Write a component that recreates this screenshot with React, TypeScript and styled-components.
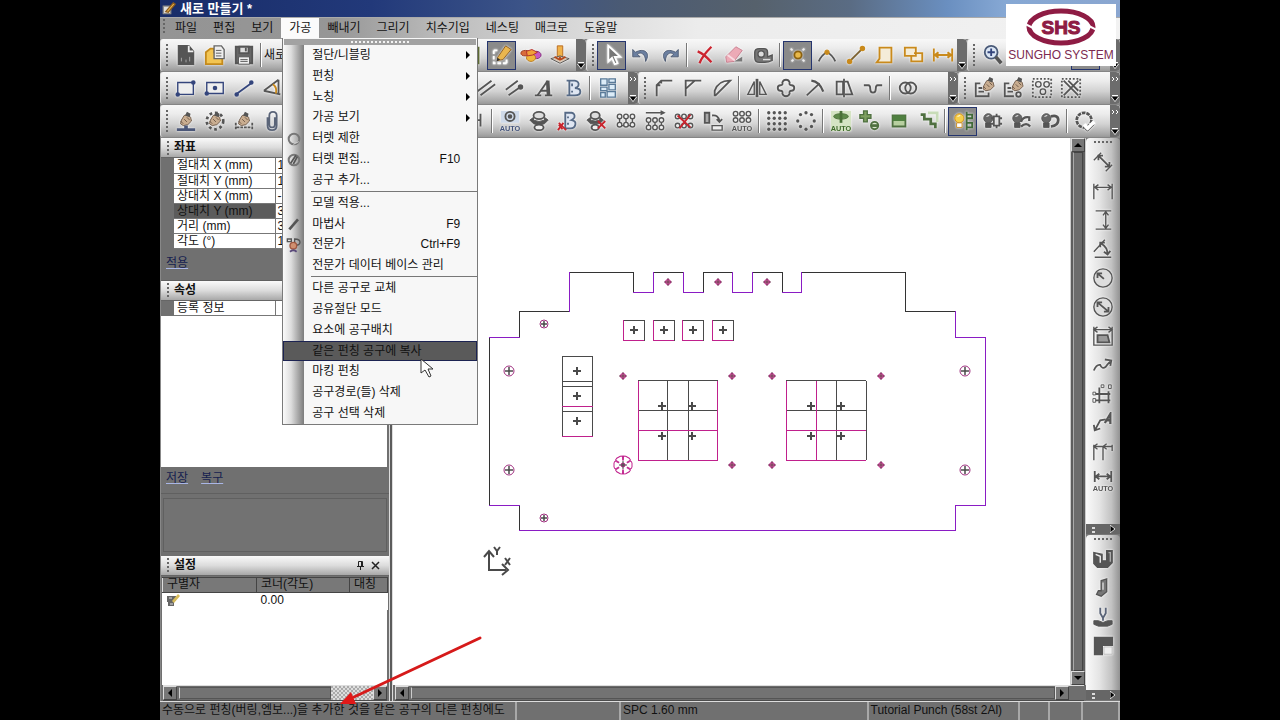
import React from 'react';
import styled, { createGlobalStyle, css } from 'styled-components';

const Global = createGlobalStyle`
  * { box-sizing: border-box; }
  body { margin: 0; background: #000; }
  button { font: inherit; color: inherit; border: 0; padding: 0; background: none; }
  ul { list-style: none; margin: 0; padding: 0; }
`;

const Stage = styled.div`
  display: flex;
  justify-content: center;
  min-height: 100vh;
  background: #000;
`;

const Window = styled.div`
  position: relative;
  display: flex;
  flex-direction: column;
  width: 75%;
  height: 100vh;
  min-height: 640px;
  overflow: hidden;
  background: #6e6e6e;
  color: #111;
  font: 12px/15px 'Liberation Sans', 'Noto Sans CJK KR', sans-serif;
`;

const TitleBar = styled.header`
  display: flex;
  align-items: center;
  gap: 3px;
  height: 17px;
  flex: none;
  padding-left: 2px;
  background: linear-gradient(to right, #182c68 0%, #22397a 22%, #3c5488 38%, #4a5a74 48%, #56616c 62%, #5a6c84 72%, #6a8fc0 82%, #86a8d4 88%, #8aa6d0 100%);
`;

const Title = styled.h1`
  margin: 0;
  color: #fff;
  font-size: 13px;
  line-height: 16px;
  font-weight: bold;
`;

const MenuBar = styled.nav`
  display: flex;
  flex: none;
  height: 22px;
  align-items: flex-start;
  border-top: 1px solid #aaa;
  background: linear-gradient(to right, #949494 0%, #969696 18%, #bdbdbd 30%, #d6d6d6 42%, #ececec 56%, #f2f2f2 100%);
`;

const MenuList = styled.ul`
  display: flex;
  margin-left: -3px;
`;

const MenuEntry = styled.li`
  position: relative;
`;

const MenuTitle = styled.button<{ $open?: boolean }>`
  height: 20px;
  padding: 0 8px;
  line-height: 20px;
  white-space: nowrap;
  background: ${p => (p.$open ? '#fbfbfb' : 'transparent')};
`;

const Grip = styled.span<{ $vertical?: boolean; $short?: boolean }>`
  flex: none;
  ${p =>
    p.$vertical
      ? css`
          width: 20px;
          height: 9px;
          align-self: center;
          background: radial-gradient(circle, #666 1px, transparent 1px) 0 0 / 4px 8px repeat-x;
        `
      : css`
          width: 10px;
          height: ${p.$short ? 16 : 24}px;
          background: radial-gradient(circle, #666 1px, transparent 1px) ${p.$short ? 0 : 2}px 0 / 8px 4px repeat-y;
        `}
`;

const DropMenu = styled.div`
  position: absolute;
  z-index: 5;
  top: 20px;
  left: 1px;
  width: 196px;
  border: 1px solid #7a7a7a;
  border-top: 0;
  background: #f7f7f7;
`;

const TearStrip = styled.div`
  height: 6px;
  margin: 1px 1px 0;
  background: #a2a2a2;
  &::after {
    content: '';
    display: block;
    width: 60px;
    height: 6px;
    margin: 0 auto;
    background: radial-gradient(circle, #f4f4f4 1px, transparent 1px) 0 0 / 4px 6px repeat-x;
  }
`;

const DropList = styled.ul`
  display: flex;
  flex-direction: column;
  height: 379px;
  background: linear-gradient(to right, #fafafa 0, #dedede 8px, #7c7c7c 21px, #f7f7f7 21px);
`;

const DropRow = styled.li`
  flex: 1 1 0;
  display: flex;
`;

const DropButton = styled.button<{ $selected?: boolean }>`
  display: flex;
  align-items: center;
  width: 100%;
  text-align: left;
  white-space: nowrap;
  border: 1px solid ${p => (p.$selected ? '#1c2352' : 'transparent')};
  background: ${p => (p.$selected ? '#5a5a5a' : 'transparent')};
`;

const DropIcon = styled.span`
  display: flex;
  justify-content: center;
  width: 20px;
  margin-right: 8px;
`;

const DropLabel = styled.span`
  flex: 1;
`;

const Shortcut = styled.span`
  padding-right: 16px;
`;

const SubArrow = styled.span`
  width: 0;
  margin-right: 6px;
  border: 4px solid transparent;
  border-left-color: #000;
  border-right-width: 0;
`;

const DropRule = styled.li`
  flex: none;
  height: 2px;
  margin-left: 28px;
  border-top: 1px solid #777;
`;

const ToolRow = styled.div`
  display: flex;
  flex: none;
  height: 33px;
  background: #858585;
`;

const Bar = styled.div<{ $grow: number }>`
  display: flex;
  align-items: center;
  flex: ${p => p.$grow} 1 0;
  min-width: 0;
  height: 32px;
  overflow: hidden;
  border-radius: 3px 4px 4px 3px;
  border-left: 1px solid #ddd;
  background: linear-gradient(#f8f8f8 0%, #ececec 28%, #d2d2d2 60%, #a9a9a9 90%, #989898 100%);
`;

const Tool = styled.button<{ $active?: boolean }>`
  display: flex;
  align-items: center;
  justify-content: center;
  flex: none;
  width: 29px;
  height: 29px;
  ${p => p.$active && css`border: 1px solid #25356e; background: #8a8a8a;`}
  svg { filter: drop-shadow(0 0 1px #fff); }
`;

const Rule = styled.span`
  flex: none;
  width: 6px;
  height: 24px;
  background: linear-gradient(#777, #777) 2px 0 / 1px 24px no-repeat, linear-gradient(#fff, #fff) 3px 0 / 1px 24px no-repeat;
`;

const Spacer = styled.span`
  flex: 1;
`;

const ToolText = styled.span`
  white-space: nowrap;
`;

const Cap = styled.button<{ $gap: number }>`
  display: flex;
  flex: none;
  flex-direction: column;
  justify-content: space-between;
  align-items: center;
  width: 10px;
  height: 32px;
  padding: 5px 0 2px;
  margin-left: ${p => p.$gap}px;
  border-radius: 0 4px 4px 0;
  background: #6c6c6c;
`;

const Body = styled.div`
  display: flex;
  flex: 1;
  min-height: 0;
`;

const Dock = styled.aside`
  display: flex;
  flex-direction: column;
  flex: none;
  width: 229px;
  border-left: 1px solid #888;
  background: #707070;
`;

const PaneHead = styled.div`
  display: flex;
  align-items: center;
  flex: none;
  height: 20px;
  padding: 0 6px 0 3px;
  border-bottom: 1px solid #666;
  background: linear-gradient(#fafafa, #dcdcdc 50%, #a8a8a8);
`;

const PaneTitle = styled.h2`
  flex: 1;
  margin: 0;
  font-size: 12px;
  font-weight: bold;
`;

const PaneButton = styled.button`
  display: flex;
  justify-content: center;
  width: 15px;
`;

const Grid = styled.table`
  flex: none;
  width: 214px;
  margin-left: 13px;
  border-collapse: collapse;
  table-layout: fixed;
  background: #fff;
`;

const NameCell = styled.th<{ $dark?: boolean }>`
  width: 101px;
  height: 15px;
  padding: 0 0 0 3px;
  border-bottom: 1px solid #777;
  border-right: 1px solid #777;
  font-weight: normal;
  line-height: 14px;
  text-align: left;
  background: ${p => (p.$dark ? '#5c5c5c' : '#fff')};
`;

const ValueCell = styled.td`
  padding: 0 0 0 2px;
  border-bottom: 1px solid #777;
  line-height: 14px;
`;

const LinkStrip = styled.div<{ $h: number }>`
  display: flex;
  flex: none;
  align-items: center;
  gap: 13px;
  height: ${p => p.$h}px;
  padding: 0 0 2px 5px;
  border-bottom: 1px solid #606060;
`;

const PaneLink = styled.a`
  color: #15204f;
  text-decoration: underline;
  text-decoration-color: #a9b6e6;
`;

const Blank = styled.div<{ $grow: number }>`
  flex: ${p => p.$grow} 1 0;
  min-height: 0;
  margin: 0 2px 0 ${p => (p.$grow < 100 ? 1 : 0)}px;
  background: #fff;
`;

const HintBox = styled.div`
  flex: none;
  height: 54px;
  margin: 4px 2px;
  border: 1px solid #606060;
  background: #727272;
`;

const Settings = styled.table`
  flex: none;
  width: 225px;
  margin: 1px 2px 0 1px;
  border-collapse: collapse;
  table-layout: fixed;
  background: #fff;
`;

const SetHead = styled.th<{ $w: number }>`
  width: ${p => p.$w}px;
  height: 15px;
  padding: 0 0 0 4px;
  border: 1px solid #444;
  border-left-color: #ddd;
  background: #787878;
  font-weight: normal;
  line-height: 13px;
  text-align: left;
  white-space: nowrap;
`;

const SetCell = styled.td`
  height: 15px;
  padding: 0 0 0 4px;
  line-height: 14px;
  vertical-align: top;
`;

const HScroll = styled.div`
  display: flex;
  flex: none;
  align-items: center;
  height: 16px;
  margin: 0 2px;
  border-top: 1px solid #ddd;
  border-bottom: 1px solid #4c4c4c;
  background: #6c6c6c;
`;

const ScrollButton = styled.button`
  display: flex;
  align-items: center;
  justify-content: center;
  flex: none;
  width: 14px;
  height: 14px;
  border: 1px solid #444;
  border-top-color: #ddd;
  border-left-color: #ddd;
  background: #777;
`;

const HThumb = styled.span`
  flex: 1;
  height: 12px;
  margin-left: 2px;
  border: 1px solid #555;
  border-left-color: #ccc;
  background: #737373;
`;

const HTrack = styled.span`
  width: 42px;
  height: 14px;
  background: repeating-conic-gradient(#ddd 0 25%, #aaa 0 50%) 0 0 / 4px 4px;
`;

const ScrollCorner = styled.span`
  flex: none;
  width: 15px;
  height: 14px;
  background: #6e6e6e;
`;

const Splitter = styled.div`
  flex: none;
  width: 4px;
  border-left: 1px solid #ddd;
  border-right: 1px solid #ddd;
  background: #5c5c5c;
`;

const Work = styled.main`
  display: flex;
  flex-direction: column;
  flex: 1;
  min-width: 0;
`;

const WorkTop = styled.div`
  display: flex;
  flex: 1;
  min-height: 0;
`;

const Drawing = styled.svg`
  flex: 1;
  min-width: 0;
  height: 100%;
  background: #fff;
`;

const VScroll = styled.div`
  display: flex;
  flex-direction: column;
  align-items: center;
  flex: none;
  width: 16px;
  border-left: 1px solid #ccc;
  border-right: 1px solid #ccc;
  background: #5e5e5e;
`;

const VThumb = styled.span`
  flex: 1;
  width: 10px;
  border: 1px solid #444;
  border-left-color: #aaa;
  background: #6c6c6c;
`;

const Side = styled.div`
  display: flex;
  flex-direction: column;
  flex: none;
  width: 34px;
  background: #777;
`;

const SideBar = styled.div<{ $grow?: boolean }>`
  display: flex;
  flex-direction: column;
  align-items: center;
  flex: ${p => (p.$grow ? '1' : 'none')};
  min-height: 165px;
  margin-bottom: 1px;
  overflow: hidden;
  border-radius: 4px 4px 0 0;
  background: linear-gradient(to right, #fafafa, #e4e4e4 40%, #c2c2c2 75%, #929292);
`;

const SideCap = styled.button`
  display: flex;
  align-items: center;
  justify-content: space-between;
  width: 100%;
  height: 10px;
  padding: 0 4px 0 6px;
  margin-top: auto;
  background: #666;
`;

const StatusBar = styled.footer`
  display: flex;
  flex: none;
  height: 19px;
  border-top: 1px solid #ddd;
  background: #707070;
`;

const StatusCell = styled.span<{ $grow: number }>`
  flex: ${p => p.$grow} 1 0;
  min-width: 0;
  padding-left: 2px;
  border-right: 2px solid #a8a8a8;
  line-height: 17px;
  white-space: nowrap;
`;

const LogoPlate = styled.div`
  position: absolute;
  z-index: 6;
  top: 4px;
  right: 4px;
  display: flex;
  flex-direction: column;
  align-items: center;
  width: 110px;
  height: 62px;
  padding-top: 2px;
  background: #fff;
`;

const LogoText = styled.span`
  color: #7c2a50;
  font-size: 12px;
  line-height: 14px;
  white-space: nowrap;
`;

const Overlay = styled.svg<{ $left: number; $top: number }>`
  position: absolute;
  z-index: 7;
  left: ${p => p.$left}px;
  top: ${p => p.$top}px;
  pointer-events: none;
`;

const G = '#555';
const O = '#c98a1c';
const N = '#34457c';

const auto = (fill: string) => (
  <text x="12" y="23" textAnchor="middle" fontSize="8" fontWeight="bold" stroke="none" fill={fill} fontFamily="Liberation Sans">AUTO</text>
);

const nodes = (pts: number[][], r = 2) => pts.map(([x, y], i) => <circle key={i} cx={x} cy={y} r={r} />);

const press = (
  <g strokeWidth="1" fill="#c9ad90" stroke="#6b5646">
    <path d="M7 11l3-5 4-1 3 3 1 4-4 4-5 1-3-2z" />
    <path d="M11 6l2-4 4 2-1 4" fill="#555" stroke="none" />
    <path d="M6 12l3 3M10 10l3 3M13 8l3 3" fill="none" />
  </g>
);

const bulb = (on: boolean) => (
  <g>
    <circle cx="8" cy="9" r="5" fill={on ? '#f6cf4a' : '#666'} stroke={on ? '#c98a1c' : '#555'} strokeWidth="1" />
    <path d="M5 14h6v5H5z" fill={on ? '#fff' : '#555'} stroke={on ? '#c98a1c' : '#555'} strokeWidth="1" />
    <path d="M6 7l3-1" stroke="#fff" strokeWidth="1" />
  </g>
);

const chain = (y: number, n = 3) =>
  Array.from({ length: n }, (_, i) => (
    <circle key={`${y}-${i}`} cx={5 + i * 7} cy={y} r="2.5" fill="#eee" stroke={G} strokeWidth="1.5" />
  ));

const redX = <path d="M2 16l4 5M7 14L1 22" stroke="#c8232c" strokeWidth="2" />;

const icons: Record<string, React.ReactNode> = {
  app: <g><path d="M2 8h12v12H2z" fill="#ddd" stroke="#888" /><path d="M6 17L18 3l3 2L10 18z" fill="#e9b44c" stroke="#8a5a1c" /></g>,
  newDoc: <g><path d="M4 2h11l5 6v14H4z" fill={G} /><path d="M15 2v6h5" stroke="#eee" /><path d="M7 15v4M12 17v3M16 14v5" stroke="#aaa" strokeWidth="1" /></g>,
  open: <g><path d="M2 22V9l5-4h4v4h9v13z" fill="#f3c552" stroke="#c48a1c" /><path d="M11 2h8l3 4v10H11z" fill="#eee" stroke="#666" strokeWidth="1.5" /><path d="M13 7h6M13 10h6M13 13h6" strokeWidth="1" /></g>,
  save: <g><path d="M3 3h18v18H3z" fill="#666" /><path d="M7 3h10v7H7z" fill="#ddd" /><path d="M14 4v4" strokeWidth="2" /><path d="M6 14h12v8H6z" fill="#eee" strokeWidth="1" /><path d="M8 17h8M8 19h8" strokeWidth="1" /></g>,
  leaf: <path d="M6 4h12v17H6z" fill="#8b9a5a" stroke="#5d6a33" />,
  edit: <g><path d="M3 7v14h14M3 7h5M17 21v-6" stroke="#fff" strokeDasharray="4 2" /><path d="M7 15L16 2l6 4-9 11-6 1z" fill="#eab64e" stroke="#8a5a1c" strokeWidth="1" /><path d="M6 19l1-4 3 2z" fill="#333" stroke="none" /></g>,
  colors: <g strokeWidth="1"><ellipse cx="6" cy="10" rx="5" ry="3" fill="#d96c3c" stroke="#9a3a1c" /><ellipse cx="18" cy="12" rx="5" ry="4" fill="#c858c0" stroke="#7a2a76" /><ellipse cx="12" cy="15" rx="5" ry="4" fill="#f0b63a" stroke="#b5761a" /><path d="M7 8l6-2 6 3-5 3-6 1z" fill="#f0a03a" stroke="#b0282c" /></g>,
  stamp: <g><path d="M9 2h6v12H9z" fill="#f0b24a" stroke="#b5651a" strokeWidth="1" /><path d="M2 16l10-3 10 3-10 5z" fill="#d9c7b5" strokeWidth="1" /><path d="M6 14l5 3M18 14l-5 3M12 14v4" stroke="#b5481a" /></g>,
  pointer: <path d="M8 2v17l4-4 3 7 3-1-3-7h6z" fill="#777" stroke="#fff" />,
  undo: <path d="M3 6v8h8l-3-3c4-3 9 0 9 8 6-10-2-15-11-10z" fill="#6b7fa0" stroke="#4a5870" strokeWidth="1" />,
  redo: <path d="M21 6v8h-8l3-3c-4-3-9 0-9 8C1 9 9 4 18 9z" fill="#6b7fa0" stroke="#4a5870" strokeWidth="1" />,
  del: <path d="M4 8c5 2 10 6 15 12M19 3C14 8 9 13 6 21" stroke="#cc2530" strokeWidth="2.5" />,
  eraser: <g><path d="M3 14L14 3l7 4-9 12-8 1z" fill="#ecaab6" stroke="#c57c8c" strokeWidth="1" /><path d="M5 12l8 6" stroke="#f8dce2" /><path d="M12 19h9v-5z" fill="#777" stroke="none" /></g>,
  tape: <g><path d="M3 9q0-4 5-4h5q4 0 4 4v5l5-2v6q-4 2-8 2H8q-5 0-5-5z" fill="#777" strokeWidth="1.5" /><circle cx="10" cy="11" r="3.5" fill="#ddd" strokeWidth="1.5" /><path d="M12 17h8" stroke="#ddd" strokeWidth="1.5" /></g>,
  snapPt: <g><circle cx="12" cy="12" r="4" fill="#e8b84a" stroke="#8a6010" /><path d="M4 5l2 2M19 5l-2 2M5 19l2-2M19 19l-2-2" stroke="#eee" /></g>,
  snapEnd: <g><path d="M3 19c2-5 5-8 9-10 4 2 7 5 9 10" /><circle cx="12" cy="9" r="2.5" fill={O} stroke={O} strokeWidth="1" /></g>,
  snapLine: <g stroke={O}><path d="M5 19L19 5" stroke="#7a6030" /><circle cx="5" cy="19" r="2" fill={O} /><circle cx="19" cy="5" r="2" fill={O} /></g>,
  sheet: <path d="M6 4h13v16H3l3-4z" stroke={O} fill="#f4ecd8" />,
  shapes: <g stroke={O} fill="#f4ecd8"><path d="M2 4h12v9H2zM12 10h9v9H9v-5" /></g>,
  width: <g stroke={O}><path d="M2 5v14M22 5v14M3 12h18" /><path d="M7 9l-4 3 4 3M17 9l4 3-4 3" fill={O} /></g>,
  zoom: <g><circle cx="10" cy="9" r="7" stroke="#4a5a78" fill="#dbe6f4" /><path d="M6 9h8M10 5v8" stroke={N} /><path d="M15 14l6 7" strokeWidth="4" /></g>,
  fit: <path d="M4 4h16v16H4z" fill="#ccc" />,
  rect: <g stroke={N}><path d="M3 6h17v13H3z" fill="#eee" strokeWidth="1.5" /><circle cx="3" cy="19" r="1.5" fill={N} /><circle cx="20" cy="6" r="1.5" fill={N} /></g>,
  rectPt: <g stroke={N}><path d="M3 6h18v12H3z" fill="#eee" strokeWidth="1.5" /><circle cx="12" cy="12" r="1.5" fill={N} /><circle cx="3" cy="18" r="1.5" fill={N} /></g>,
  line: <g stroke={N}><path d="M3 19L21 6" /><circle cx="4" cy="19" r="1.5" fill={N} /><circle cx="20" cy="6" r="1.5" fill={N} /></g>,
  angle: <g><path d="M2 15L18 3M2 15l18 4M18 3v16" /><path d="M12 8q5 4 3 10" stroke={O} fill="#eee" /></g>,
  hatch: <path d="M2 16L18 4M6 20L22 8" />,
  hatchPt: <g><path d="M2 14L15 4M5 20l14-10" /><circle cx="18" cy="11" r="2" fill={G} /></g>,
  italicA: <g><path d="M2 20h7M13 20h8M8 15h9" /><path d="M5 20L16 4" /><path d="M16 4l1 16" strokeWidth="4" /></g>,
  boldB: <path d="M5 4h9q5 1 4 5-1 3-4 3 6 0 6 4t-6 4H5v0h3V4zM11 7v3M11 15v2" fill="#dfe6f2" stroke="#566a86" />,
  grid: <g stroke="#5a7a98" fill="#dcecf8" strokeWidth="1.5"><path d="M4 2h7v7H4zM13 2h7v4h-7zM13 8h7v6h-7zM4 11h7v4H4zM4 17h5v5H4zM11 16h9v6h-9z" /></g>,
  corner: <path d="M4 21V9L9 4h12M4 9h4M9 4v3" />,
  chamfer: <path d="M4 21V4h17M4 13L14 4" />,
  arcCorner: <path d="M4 20V15Q8 4 20 4h1L5 20z" />,
  mirror: <g><path d="M12 2v20" strokeWidth="3" /><path d="M9 5v14H2zM15 5v14h7z" strokeWidth="1.5" /></g>,
  clover: <path d="M8 6q1-3 4-3t4 3q-1 3 2 3 3 0 3 3t-3 3q-3 0-2 3-1 3-4 3t-4-3q1-3-2-3-3 0-3-3t3-3q3 0 2-3z" />,
  trim: <g><path d="M3 20L17 7" /><path d="M8 4q9 1 13 12" strokeWidth="2.5" /></g>,
  prism: <g><path d="M4 5h7v14H4zM13 5h3l5 14h-8" strokeWidth="2" /><path d="M12 2v20" /></g>,
  dip: <path d="M2 9h5q2 0 2 4t3 4 3-4 2-4h5" />,
  rings: <g><circle cx="9" cy="12" r="6" /><circle cx="15" cy="12" r="6" /></g>,
  pressSheet: <g><path d="M8 7H3v14h14v-4M6 12h4M6 16h6" />{<g transform="translate(5 -2)">{press}</g>}</g>,
  pressDot: <g><path d="M8 7H3v14h10M6 12h4M6 16h6" />{<g transform="translate(5 -2)">{press}</g>}<circle cx="18" cy="19" r="2.5" /></g>,
  holes: <g><path d="M2 2h20v20H2z" strokeDasharray="2 2" /><circle cx="8" cy="8" r="3" strokeWidth="1.5" /><circle cx="17" cy="8" r="3" strokeWidth="1.5" /><circle cx="13" cy="16" r="3" strokeWidth="1.5" /></g>,
  holesX: <g><path d="M2 2h20v20H2z" strokeDasharray="2 2" /><path d="M4 4l16 16M20 4L4 20M9 4l11 11" /></g>,
  pressBase: <g>{press}<path d="M2 20h8v-3h4v3h8v3H2z" fill="#4a5678" stroke="none" /></g>,
  pressGear: <g><circle cx="12" cy="12" r="9" strokeDasharray="3 3" strokeWidth="3" />{press}</g>,
  pressSpan: <g>{press}<path d="M3 14v8M21 14v8M4 19h16" strokeDasharray="3 1" /></g>,
  clip: <path d="M6 8v9q0 5 5 5t5-5V6q0-4-4-4T8 6v10q0 3 3 3t3-3V8" stroke="#5a6478" />,
  tShape: <path d="M2 4v14M2 11h16M18 4v14" />,
  autoPunch: <g><path d="M2 1h20v13H2z" fill="#cfdaea" stroke="none" /><circle cx="12" cy="7" r="5" /><circle cx="12" cy="7" r="1.5" fill={G} />{auto('#45557c')}</g>,
  turret: <g><ellipse cx="12" cy="6" rx="6" ry="4" fill="#ddd" /><path d="M2 11l4-3v3q6 3 12 0V8l4 3-4 4q-6 3-12 0z" fill={G} strokeWidth="1" /><ellipse cx="12" cy="19" rx="5" ry="3" fill="#eee" /></g>,
  turretB: <g><path d="M8 3h8q4 1 3 5-1 2-3 3 5 1 4 5-1 4-5 4H9V3zM12 7v2M12 14v2" fill="#dfe6f2" stroke="#566a86" />{redX}<path d="M2 14l8 8" stroke="#c8232c" /></g>,
  turretX: <g><ellipse cx="10" cy="6" rx="5" ry="4" fill="#ddd" /><path d="M1 11l4-3v3q5 2 10 0V8l4 3-4 4H5z" fill={G} strokeWidth="1" /><ellipse cx="10" cy="19" rx="4" ry="3" fill="#eee" /><path d="M13 12l8 8M21 12l-8 8" stroke="#c8232c" /></g>,
  chain2: <g><path d="M5 8v9M12 8v9M19 8v9M5 17h14" strokeWidth="1.5" />{chain(7)}{chain(16)}</g>,
  chainArrow: <g><path d="M2 3h19M18 1l4 2-4 2" strokeWidth="1.5" /><path d="M5 11v8M12 11v8M19 11v8" strokeWidth="1.5" />{chain(11)}{chain(19)}</g>,
  chainX: <g>{chain(7)}{chain(17)}<path d="M5 6l14 13M19 5L7 20" stroke="#c8232c" /></g>,
  swap: <g><path d="M3 3h5v11H3z" fill="#aaa" /><path d="M11 17h11v5H11z" fill="#eee" strokeWidth="1.5" /><path d="M11 6q7-1 8 6M16 10l3 3 3-3" /></g>,
  chainAuto: <g>{chain(4)}{chain(11)}{auto('#555')}</g>,
  dots: <g fill={G} stroke="none">{[3, 9, 15, 21].map(y => [3, 9, 15, 21].map(x => <circle key={`${x}-${y}`} cx={x} cy={y} r="1.8" />))}</g>,
  dotRing: <g fill={G} stroke="none">{nodes([[12, 3], [18, 5], [21, 12], [18, 18], [12, 21], [6, 18], [3, 12], [6, 5]], 1.8)}</g>,
  greenAuto: <g><path d="M1 1h22v22H1z" fill="#d5e4c4" stroke="none" /><ellipse cx="12" cy="7" rx="8" ry="3" fill="#5e8a4a" stroke="#4a7038" strokeWidth="1" /><path d="M12 1v13" stroke="#4a7038" strokeWidth="3" />{auto('#3f6a2c')}</g>,
  greenAdd: <g stroke="#4f7040"><path d="M5 1h4v4h4v4H9v4H5V9H1V5h4z" fill="#7fa060" strokeWidth="1.5" /><circle cx="17" cy="17" r="4" fill="#dce8d0" /><path d="M13 17h8" strokeWidth="3" /></g>,
  greenHalf: <g><path d="M5 6h14v12H5z" fill="#b8d0a0" stroke="#4f7040" /><path d="M5 6h14v6H5z" fill="#4f8040" stroke="none" /></g>,
  greenStep: <g><path d="M12 3h10v10" stroke="#c8dcb8" strokeWidth="3" /><path d="M4 5h4v5h7v5h5v5" stroke="#4f7040" strokeWidth="3" /></g>,
  bulbOn: <g>{bulb(true)}<path d="M16 2v20M16 5h6v4h-6M16 14h6v5h-6" stroke="#406a38" /></g>,
  bulb1: <g>{bulb(false)}<path d="M14 7h6v10h-6zM11 9h3M20 9h3M11 15h3M20 15h3M17 4v3M17 17v3" /></g>,
  bulb2: <g>{bulb(false)}<path d="M12 13q2-6 9-5v4M12 18q6-5 10 0" strokeWidth="2.5" /></g>,
  bulb3: <g>{bulb(false)}<path d="M13 7q8-2 8 4 0 6-8 7" strokeWidth="3" /></g>,
  gearOk: <g><circle cx="11" cy="11" r="8" strokeWidth="3" strokeDasharray="4 1" /><path d="M11 16l4 4 7-7" stroke="#fff" strokeWidth="4" /><path d="M12 21l3 2 7-7" strokeWidth="1" /></g>,
  dimSlant: <g><path d="M2 10l8-8M15 22l7-7" strokeWidth="1.5" /><path d="M7 5l12 12M12 5H7v5M19 12v5h-5" /></g>,
  dimH: <path d="M2 4v17M22 4v17M3 8h18M7 5L3 8l4 3M17 5l4 3-4 3" strokeWidth="1.5" />,
  dimV: <path d="M4 2h17M4 22h17M15 3v18M12 7l3-4 3 4M12 17l3 4 3-4" strokeWidth="1.5" />,
  dimAngle: <g><path d="M2 15L14 2M3 21h18" strokeWidth="1.5" /><path d="M10 6q7 4 7 12M9 10V5h5M13 15l4 3 3-4" /></g>,
  radius: <g><circle cx="12" cy="12" r="10" fill="#ddd" strokeWidth="1.5" /><path d="M13 13L6 7M6 12V7h5" /></g>,
  diameter: <g><circle cx="12" cy="12" r="10" fill="#ddd" strokeWidth="1.5" /><path d="M6 7l12 10M6 12V7h5M18 12v5h-5" /></g>,
  dimBox: <g><path d="M2 2v20h20V2M2 5h20M6 2L2 5l4 3M18 2l4 3-4 3" strokeWidth="1.5" /><path d="M6 19v-8h11l2 8z" fill="#999" /></g>,
  curve: <path d="M2 18q3-7 7-6 2 5 6 2 2-3 5-6M14 6l7 1-1 6" />,
  coords: <g><path d="M8 5v17M18 9v13M4 12h16M4 19h16" /><path d="M10 2h3v3h-3zM18 2h3v4h-3zM1 10h3v3H1zM1 17h3v4H1z" strokeWidth="1" /></g>,
  leader: <g><path d="M3 20L9 9l6-1M2 14l1 6 6-2" /><path d="M14 12L20 2v11M16 9h5" strokeWidth="2.5" /></g>,
  dimBase: <path d="M2 4v17M2 6h20M12 6v15M22 4v7M6 3L2 6l4 3M16 3l-4 3 4 3" strokeWidth="1.5" />,
  dimAuto: <g><path d="M3 1v12M21 1v12M4 7h16M8 4L4 7l4 3M16 4l4 3-4 3" />{auto('#555')}</g>,
  bendU: <g strokeWidth="1.5"><path d="M2 5v12l4 4h11l5-5V3h-6v11h-5V7z" fill={G} /><path d="M4 7l5 2v7" stroke="#eee" /><path d="M18 5h2v10" stroke="#aaa" /></g>,
  bendSmall: <g strokeWidth="1.5"><path d="M10 4l6-2v14l-6 5-5-2 2-4h3z" fill="#777" /><path d="M12 6v8" stroke="#ddd" /></g>,
  punchTool: <g><path d="M9 2v6l3 5 3-5V2M12 12v4" stroke="#5a6478" /><path d="M2 16h5l5 2 5-2h5v4l-5 2H7l-5-2z" fill={G} strokeWidth="1" /></g>,
  sheetCorner: <g><path d="M3 3h19v8H11v10H3z" fill={G} /><path d="M13 13h9v8h-9z" fill="#eee" stroke="#bbb" strokeWidth="1" /></g>,
  ring: <g><circle cx="12" cy="12" r="8" strokeWidth="3" stroke="#777" /><path d="M11 20l8-4" stroke="#fff" strokeWidth="1" /></g>,
  slash: <g><circle cx="12" cy="12" r="8" strokeWidth="3" stroke="#777" /><path d="M7 17L15 5M11 18l6-11" strokeWidth="2.5" /></g>,
  wand: <path d="M5 20L18 5" strokeWidth="4" />,
  expert: <g><path d="M2 3h6v4H2zM13 3q8 0 8 5t-8 4z" /><circle cx="11" cy="13" r="5" fill="#d09070" stroke="#a05840" /><path d="M6 22q5-4 10 0" stroke="#5a4a7a" strokeWidth="3" /></g>,
};

const Icon = ({ name, size = 24 }: { name: string; size?: number }) => (
  <svg width={size} height={size} viewBox="0 0 24 24" fill="none" stroke={G} strokeWidth="2" aria-hidden="true">
    {icons[name]}
  </svg>
);

// "|" is a divider, "~" a stretch; a leading "*" marks a pressed tool.
const Tools = ({ list }: { list: string[] }) => (
  <>
    {list.map((n, i) => {
      if (n === '|') return <Rule key={i} />;
      if (n === '~') return <Spacer key={i} />;
      const active = n[0] === '*';
      const name = active ? n.slice(1) : n;
      return (
        <Tool key={i} $active={active} aria-label={name} aria-pressed={active}>
          <Icon name={name} size={22} />
        </Tool>
      );
    })}
  </>
);

const More = ({ gap = 0, marks = true }: { gap?: number; marks?: boolean }) => (
  <Cap $gap={gap} aria-label="more tools">
    <svg width="8" height="5" fill="none" stroke="#fff" aria-hidden="true">{marks && <path d="M1 0l2 2-2 2M5 0l2 2-2 2" />}</svg>
    <svg width="8" height="7" aria-hidden="true"><path d="M1 0h6v1H1z" fill="#fff" /><path d="M0 2h8L4 7z" fill="#fff" /><path d="M1 2h6L4 6z" fill="#000" /></svg>
  </Cap>
);

const Arrow = ({ d }: { d: string }) => (
  <svg width="8" height="8" aria-hidden="true"><path d={d} fill="#000" /></svg>
);
const LEFT = 'M6 0v8L2 4z';
const RIGHT = 'M2 0v8l4-4z';
const UP = 'M0 6h8L4 2z';
const DOWN = 'M0 2h8L4 6z';

type Item = { label: string; key?: string; sub?: boolean; icon?: string; selected?: boolean } | null;

const processItems: Item[] = [
  { label: '절단/니블링', sub: true },
  { label: '펀칭', sub: true },
  { label: '노칭', sub: true },
  { label: '가공 보기', sub: true },
  { label: '터렛 제한', icon: 'ring' },
  { label: '터렛 편집...', key: 'F10', icon: 'slash' },
  { label: '공구 추가...' },
  null,
  { label: '모델 적용...' },
  { label: '마법사', key: 'F9', icon: 'wand' },
  { label: '전문가', key: 'Ctrl+F9', icon: 'expert' },
  { label: '전문가 데이터 베이스 관리' },
  null,
  { label: '다른 공구로 교체' },
  { label: '공유절단 모드' },
  { label: '요소에 공구배치' },
  { label: '같은 펀칭 공구에 복사', selected: true },
  { label: '마킹 펀칭' },
  { label: '공구경로(들) 삭제' },
  { label: '공구 선택 삭제' },
];

const ProcessMenu = () => (
  <DropMenu>
    <TearStrip />
    <DropList>
      {processItems.map((it, i) =>
        it === null ? (
          <DropRule key={i} />
        ) : (
          <DropRow key={i}>
            <DropButton $selected={it.selected}>
              <DropIcon>{it.icon && <Icon name={it.icon} size={16} />}</DropIcon>
              <DropLabel>{it.label}</DropLabel>
              {it.key && <Shortcut>{it.key}</Shortcut>}
              {it.sub && <SubArrow />}
            </DropButton>
          </DropRow>
        ),
      )}
    </DropList>
  </DropMenu>
);

const menus = ['파일', '편집', '보기', '가공', '빼내기', '그리기', '치수기입', '네스팅', '매크로', '도움말'];

const coords = [
  ['절대치 X (mm)', '1'],
  ['절대치 Y (mm)', '1'],
  ['상대치 X (mm)', '-'],
  ['상대치 Y (mm)', '3'],
  ['거리 (mm)', '3'],
  ['각도 (°)', '1'],
];

const P = '#c0208c';
const V = '#8a1cc4';
const K = '#4a4a4a';

const Plus = ({ x, y, r = 4 }: { x: number; y: number; r?: number }) => (
  <path d={`M${x - r} ${y}h${2 * r}M${x} ${y - r}v${2 * r}`} stroke={K} strokeWidth="2" />
);

const Hole = ({ x, y, r }: { x: number; y: number; r: number }) => (
  <g shapeRendering="auto">
    <circle cx={x} cy={y} r={r} stroke="#a03080" strokeWidth="1" fill="none" />
    <path d={`M${x - r + 1} ${y}h${2 * r - 2}M${x} ${y - r + 1}v${2 * r - 2}`} stroke={K} strokeWidth="1.5" />
  </g>
);

const Pin = ({ x, y }: { x: number; y: number }) => (
  <g shapeRendering="auto">
    <circle cx={x} cy={y} r="2.5" fill="#d090a8" stroke={P} strokeWidth="1" />
    <path d={`M${x - 4} ${y}h8M${x} ${y - 4}v8`} stroke="#703050" strokeWidth="1" />
  </g>
);

const Plate = () => (
  <Drawing role="img" aria-label="판재 도면">
    <g transform="translate(-393 -139)" fill="none" strokeWidth="1" shapeRendering="crispEdges">
      <path
        stroke={V}
        d="M489.5 338.5H519.5V312.5H569.5V273.5H633.5V293.5H653.5V273.5H683.5V293.5H703.5V273.5H732.5V293.5H752.5V273.5H782.5V293.5H801.5V273.5H905.5V312.5H955.5V338.5H985.5V506.5H955.5V531.5H519.5V506.5H489.5Z"
      />
      <path
        stroke="#333"
        d="M489.5 339V506M519.5 338V312.5H569M570 273.5H633.5V293M654 273.5H683M703.5 293V273.5H732M753 273.5H782.5V293M802 273.5H905.5V312.5H955M519.5 507V531"
      />
      {[624, 654, 683, 713].map(x => (
        <g key={x}>
          <path d={`M${x} 321.5h20v20`} stroke={K} />
          <path d={`M${x - 0.5} 321v20.5h20`} stroke={P} />
          <Plus x={x + 10} y={331} />
        </g>
      ))}
      <path d="M562.5 437.5V357.5H592.5V437.5M562 382.5h31M562 387.5h31M562 412.5h31" stroke={K} />
      <path d="M562 407.5h31M562 437.5h31" stroke={P} />
      {[372, 397, 422].map(y => <Plus key={y} x={577} y={y} />)}
      <path d="M638 381.5h80M667.5 382v79M688.5 382v79M638 411.5h80" stroke={K} />
      <path d="M638.5 382v80M717.5 382v80M638 431.5h80M638 461.5h80" stroke={P} />
      <path d="M786 381.5h80M836.5 382v79M866.5 382v79M786 411.5h80" stroke={K} />
      <path d="M786.5 382v80M816.5 382v80M786 431.5h80M786 461.5h80" stroke={P} />
      {[662, 692, 811, 841].map(x => [407, 437].map(y => <Plus key={`${x}-${y}`} x={x} y={y} />))}
      {[[509, 372], [509, 471], [965, 372], [965, 471]].map(([x, y]) => <Hole key={`${x}-${y}`} x={x} y={y} r={5} />)}
      {[[544, 325], [544, 519]].map(([x, y]) => <Hole key={`${x}-${y}`} x={x} y={y} r={4} />)}
      {[[668, 283], [718, 283], [767, 283], [623, 377], [732, 377], [732, 466], [772, 377], [772, 466], [881, 377], [881, 466]].map(([x, y]) => (
        <Pin key={`${x}-${y}`} x={x} y={y} />
      ))}
      <g transform="translate(623 466)" shapeRendering="auto" stroke={P}>
        {[0, 60, 120, 180, 240, 300].map(a => (
          <path key={a} d="M-2-4l-2-4 2-1h4l2 1-2 4" transform={`rotate(${a + 30})`} />
        ))}
        <circle r="2" fill="#a07088" />
        <path d="M-4 0h8M0-4v8" stroke={K} />
      </g>
      <g stroke={K} strokeWidth="2" shapeRendering="auto">
        <path d="M489 553v18h17M484 558l5-6 5 6M502 565l6 6-6 5" />
        <path d="M494 548l3 4 3-4M497 552v4M505 559l5 7M510 559l-5 7" />
      </g>
    </g>
  </Drawing>
);

const SideMore = () => (
  <SideCap aria-label="more tools">
    <svg width="4" height="7" aria-hidden="true"><path d="M0 1h3v2H0zM0 5h3v2H0z" fill="#ddd" /></svg>
    <svg width="6" height="8" aria-hidden="true"><path d="M0 0l5 4-5 4z" fill="#000" stroke="#ddd" /></svg>
  </SideCap>
);

export default function App() {
  return (
    <Stage>
      <Global />
      <Window>
        <TitleBar>
          <Icon name="app" size={15} />
          <Title>새로 만들기 *</Title>
        </TitleBar>
        <MenuBar>
          <Grip $short />
          <MenuList>
            {menus.map(m => (
              <MenuEntry key={m}>
                <MenuTitle $open={m === '가공'}>{m}</MenuTitle>
                {m === '가공' && <ProcessMenu />}
              </MenuEntry>
            ))}
          </MenuList>
        </MenuBar>

        <ToolRow>
          <Bar $grow={426}>
            <Grip />
            <Tools list={['newDoc', 'open', 'save', '|']} />
            <ToolText>새로</ToolText>
            <Tools list={['~', 'leaf', '*edit', 'colors', 'stamp']} />
            <More gap={2} marks={false} />
          </Bar>
          <Bar $grow={381}>
            <Grip />
            <Tools list={['*pointer', 'undo', 'redo', '|', 'del', 'eraser', 'tape', '|', '*snapPt', 'snapEnd', 'snapLine', 'sheet', 'shapes', 'width', '~']} />
            <More marks={false} />
          </Bar>
          <Bar $grow={152}>
            <Grip />
            <Tools list={['zoom', '~', '*fit']} />
            <More gap={10} marks={false} />
          </Bar>
        </ToolRow>
        <ToolRow>
          <Bar $grow={478}>
            <Grip />
            <Tools list={['rect', 'rectPt', 'line', 'angle', '~', 'hatch', 'hatchPt', 'italicA', 'boldB', '|', 'grid']} />
            <More gap={6} />
          </Bar>
          <Bar $grow={320}>
            <Grip />
            <Tools list={['corner', 'chamfer', 'arcCorner', '|', 'mirror', 'clover', 'trim', 'prism', 'dip', '|', 'rings', '~']} />
            <More />
          </Bar>
          <Bar $grow={161}>
            <Grip />
            <Tools list={['pressSheet', 'pressDot', 'holes', 'holesX', '~']} />
            <More />
          </Bar>
        </ToolRow>
        <ToolRow>
          <Bar $grow={1}>
            <Grip />
            <Tools
              list={[
                'pressBase', 'pressGear', 'pressSpan', 'clip', '~', 'tShape', '|',
                'autoPunch', 'turret', 'turretB', 'turretX', 'chain2', 'chainArrow', 'chainX', 'swap', 'chainAuto', '|',
                'dots', 'dotRing', '|', 'greenAuto', 'greenAdd', 'greenHalf', 'greenStep', '|',
                '*bulbOn', 'bulb1', 'bulb2', 'bulb3', '|', 'gearOk',
              ]}
            />
            <More gap={11} />
          </Bar>
        </ToolRow>

        <Body>
          <Dock>
            <PaneHead>
              <Grip $short />
              <PaneTitle>좌표</PaneTitle>
            </PaneHead>
            <Grid>
              <tbody>
                {coords.map(([n, v]) => (
                  <tr key={n}>
                    <NameCell scope="row" $dark={n === '상대치 Y (mm)'}>{n}</NameCell>
                    <ValueCell>{v}</ValueCell>
                  </tr>
                ))}
              </tbody>
            </Grid>
            <LinkStrip $h={32}>
              <PaneLink href="#apply">적용</PaneLink>
            </LinkStrip>
            <PaneHead>
              <Grip $short />
              <PaneTitle>속성</PaneTitle>
            </PaneHead>
            <Grid>
              <tbody>
                <tr>
                  <NameCell scope="row">등록 정보</NameCell>
                  <ValueCell />
                </tr>
              </tbody>
            </Grid>
            <Blank $grow={150} />
            <LinkStrip $h={27}>
              <PaneLink href="#save">저장</PaneLink>
              <PaneLink href="#restore">복구</PaneLink>
            </LinkStrip>
            <HintBox />
            <PaneHead>
              <Grip $short />
              <PaneTitle>설정</PaneTitle>
              <PaneButton aria-label="고정">
                <svg width="9" height="9" fill="none" stroke="#222" aria-hidden="true"><path d="M1 5.5h7M2.5 5V.5h4V5M5.5 1v4M4.5 5v4" /></svg>
              </PaneButton>
              <PaneButton aria-label="닫기">
                <svg width="9" height="9" fill="none" stroke="#222" strokeWidth="1.5" aria-hidden="true"><path d="M1 1l7 7M8 1L1 8" /></svg>
              </PaneButton>
            </PaneHead>
            <Settings>
              <thead>
                <tr>
                  <SetHead $w={94}>구별자</SetHead>
                  <SetHead $w={93}>코너(각도)</SetHead>
                  <SetHead $w={38}>대칭</SetHead>
                </tr>
              </thead>
              <tbody>
                <tr>
                  <SetCell>
                    <svg width="14" height="14" aria-hidden="true"><path d="M0 3h9v5H7v5H1V9H0z" fill="#666" /><path d="M5 8l6-7 2 2-6 7z" fill="#d8bc5a" /><path d="M2 5h3M3 11h3" stroke="#ddd" /></svg>
                  </SetCell>
                  <SetCell>0.00</SetCell>
                  <SetCell />
                </tr>
              </tbody>
            </Settings>
            <Blank $grow={75} />
            <HScroll>
              <ScrollButton aria-label="왼쪽"><Arrow d={LEFT} /></ScrollButton>
              <HThumb />
              <HTrack />
              <ScrollButton aria-label="오른쪽"><Arrow d={RIGHT} /></ScrollButton>
            </HScroll>
          </Dock>
          <Splitter />
          <Work>
            <WorkTop>
              <Plate />
              <VScroll>
                <ScrollButton aria-label="위"><Arrow d={UP} /></ScrollButton>
                <VThumb />
                <ScrollButton aria-label="아래"><Arrow d={DOWN} /></ScrollButton>
              </VScroll>
            </WorkTop>
            <HScroll>
              <ScrollButton aria-label="왼쪽"><Arrow d={LEFT} /></ScrollButton>
              <HThumb />
              <ScrollButton aria-label="오른쪽"><Arrow d={RIGHT} /></ScrollButton>
              <ScrollCorner />
            </HScroll>
          </Work>
          <Side>
            <SideBar $grow>
              <Grip $vertical />
              <Tools list={['dimSlant', 'dimH', 'dimV', 'dimAngle', 'radius', 'diameter', 'dimBox', 'curve', 'coords', 'leader', 'dimBase', 'dimAuto']} />
              <SideMore />
            </SideBar>
            <SideBar>
              <Grip $vertical />
              <Tools list={['bendU', 'bendSmall', 'punchTool', 'sheetCorner']} />
              <SideMore />
            </SideBar>
          </Side>
        </Body>

        <StatusBar>
          <StatusCell $grow={354}>수동으로 펀칭(버링,엠보...)을 추가한 것을 같은 공구의 다른 펀칭에도</StatusCell>
          <StatusCell $grow={100} />
          <StatusCell $grow={244}>SPC 1.60 mm</StatusCell>
          <StatusCell $grow={148}>Tutorial Punch (58st 2Al)</StatusCell>
          <StatusCell $grow={26} />
          <StatusCell $grow={29} />
          <StatusCell $grow={33} />
        </StatusBar>

        <LogoPlate>
          <svg width="72" height="42" viewBox="0 0 72 42" aria-hidden="true">
            <ellipse cx="36" cy="21" rx="32" ry="16" fill="none" stroke="#8e1c44" strokeWidth="5" />
            <path d="M0 18l10 5M72 24l-10-5" stroke="#fff" strokeWidth="2" />
            <text x="36" y="28" textAnchor="middle" fontFamily="Liberation Sans" fontWeight="bold" fontSize="19" fill="#8e1c44" stroke="#8e1c44" strokeWidth="1">SHS</text>
          </svg>
          <LogoText>SUNGHO SYSTEM</LogoText>
        </LogoPlate>
        <Overlay $left={260} $top={358} width="14" height="22" aria-hidden="true">
          <path d="M1 1v14l4-3 4 7 2-1-3-7h5z" fill="#fff" stroke="#333" />
        </Overlay>
        <Overlay $left={180} $top={634} width="144" height="74" aria-hidden="true">
          <path d="M140 4L14 63" stroke="#d61a1a" strokeWidth="3" strokeLinecap="round" />
          <path d="M0 70L11 58l5 12z" fill="#e01818" />
        </Overlay>
      </Window>
    </Stage>
  );
}
